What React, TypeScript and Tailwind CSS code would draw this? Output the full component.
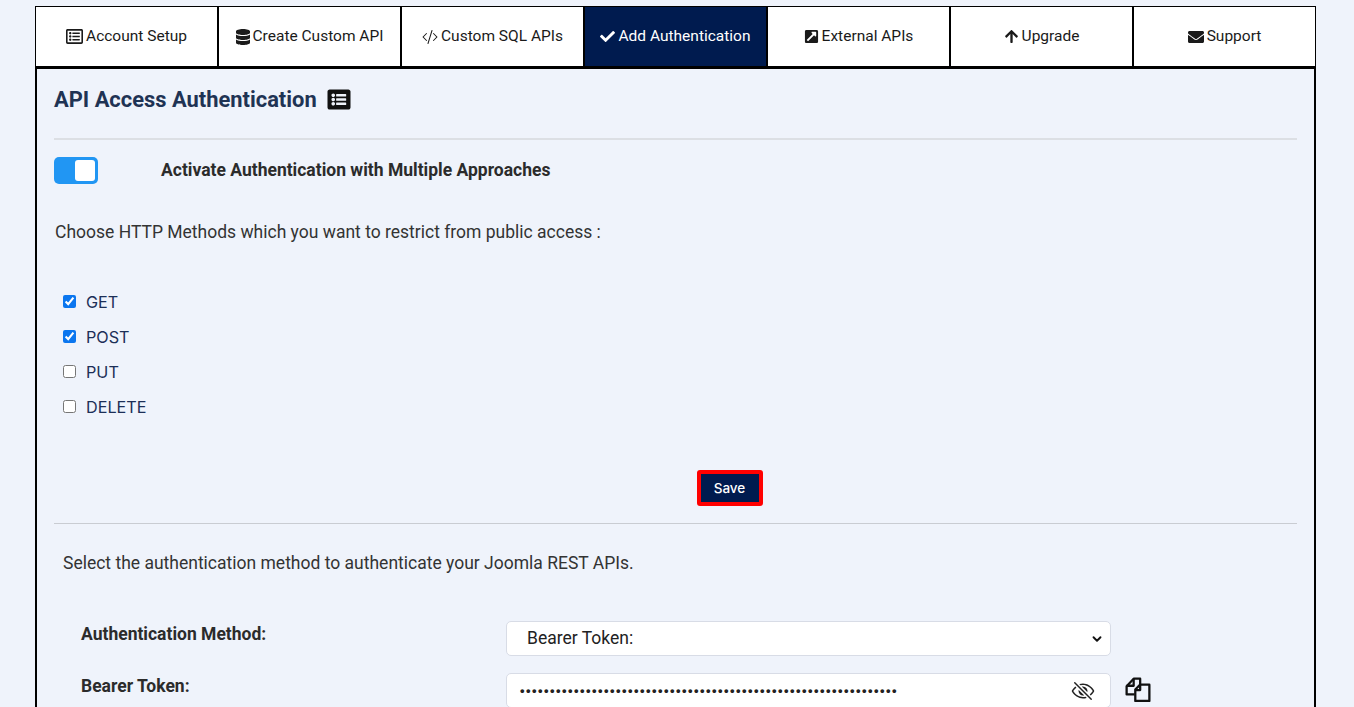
import type { ReactNode } from 'react';
import { FaArrowUp, FaCheck, FaDatabase, FaEnvelope, FaExternalLinkSquareAlt, FaListAlt, FaRegListAlt } from 'react-icons/fa';
import { BsCodeSlash } from 'react-icons/bs';
import { IoEyeOffOutline } from 'react-icons/io5';
import { ChevronDown } from 'lucide-react';

const tabs: { label: string; icon: ReactNode; active?: boolean }[] = [
  { label: 'Account Setup', icon: <FaRegListAlt className="w-[17px] h-[17px]" /> },
  { label: 'Create Custom API', icon: <FaDatabase className="w-[14px] h-[16px]" /> },
  { label: 'Custom SQL APIs', icon: <BsCodeSlash className="w-4 h-4" /> },
  { label: 'Add Authentication', icon: <FaCheck className="w-[15px] h-[15px]" />, active: true },
  { label: 'External APIs', icon: <FaExternalLinkSquareAlt className="w-[15px] h-[15px]" /> },
  { label: 'Upgrade', icon: <FaArrowUp className="w-[15px] h-[15px]" /> },
  { label: 'Support', icon: <FaEnvelope className="w-4 h-4" /> },
];

const methods = [
  { label: 'GET', checked: true },
  { label: 'POST', checked: true },
  { label: 'PUT', checked: false },
  { label: 'DELETE', checked: false },
];

function CopyIcon() {
  return (
    <svg viewBox="0 0 24 24" className="w-[26px] h-[26px]" fill="none" stroke="#111" strokeWidth="2.1" strokeLinejoin="round">
      <path d="M9 17H1.5v-7.5L8 2.5h6V8" />
      <path d="M8 2.5V9H1.5" />
      <path d="M9.5 12.5L14 8h8.5v15h-13z" />
      <path d="M14 8v5H9.5" />
    </svg>
  );
}

export default function App() {
  return (
    <div className="h-screen overflow-hidden bg-[#eff3fb] pt-[6px] pl-[35px] pr-[38px] font-['Roboto',sans-serif]">
      <div className="flex border-t border-l border-r border-black bg-white h-[63px] border-b-[3px]">
        {tabs.map((tab, i) => (
          <div
            key={tab.label}
            className={`flex-1 flex items-center justify-center gap-[3px] text-[15.5px] ${
              i < tabs.length - 1 ? 'border-r-2 border-black' : ''
            } ${tab.active ? 'bg-[#001b4f] text-white' : 'text-[#1a1a1a]'}`}
          >
            {tab.icon}
            <span>{tab.label}</span>
          </div>
        ))}
      </div>

      <div className="border-l-2 border-r-2 border-black pl-[17px] pr-[17px] h-[700px]">
        <div className="flex items-center gap-[9px] pt-[8px] h-[71px] pb-[16px] border-b-2 border-[#dcdfe4]">
          <h2 className="text-[21.9px] font-bold text-[#1f3354] leading-none">API Access Authentication</h2>
          <FaListAlt className="w-[26px] h-[23px] text-[#111]" />
        </div>

        <div className="flex items-center mt-[17px] h-[27px]">
          <div className="w-[44px] h-[27px] rounded-[5px] bg-[#2196f3] flex justify-end items-center pr-[3px]">
            <div className="w-[20px] h-[21px] rounded-[3px] bg-white"></div>
          </div>
          <div className="ml-[63px] text-[17.5px] font-bold text-[#2b2b2b]">Activate Authentication with Multiple Approaches</div>
        </div>

        <p className="mt-[35px] ml-px text-[17.5px] leading-[26px] text-[#333]">
          Choose HTTP Methods which you want to restrict from public access :
        </p>

        <div className="mt-[44px] ml-[9px] flex flex-col gap-[11px]">
          {methods.map((m) => (
            <label key={m.label} className="flex items-center gap-[10px] h-[24px] text-[16.2px] text-[#1c2f57] font-['Inter',sans-serif]">
              <input type="checkbox" defaultChecked={m.checked} className="w-[13px] h-[13px] accent-[#0b76ef]" />
              <span className="pt-[2px]">{m.label}</span>
            </label>
          ))}
        </div>

        <div className="mt-[52px] pl-[108px] flex justify-center">
          <button className="w-[66px] h-[36px] rounded-[3px] border-4 border-[#ff0000] bg-[#001b4f] pt-px text-white text-[13.5px] font-medium font-['Inter',sans-serif]">
            Save
          </button>
        </div>

        <div className="mt-[17px] border-t border-[#c9ccd2]"></div>

        <p className="mt-[26px] ml-[9px] text-[17.5px] leading-[26px] text-[#333]">
          Select the authentication method to authenticate your Joomla REST APIs.
        </p>

        <div className="mt-[45px] ml-[27px] flex items-start">
          <div className="w-[425px] pt-[0px] text-[17.5px] leading-[26px] font-bold text-[#2b2b2b]">Authentication Method:</div>
          <div className="w-[605px] h-[35px] bg-white rounded-[5px] border border-[#d8dce6] flex items-center justify-between pl-[20px] pr-[6px] text-[17.5px] text-[#222]">
            <span>Bearer Token:</span>
            <ChevronDown className="w-[14px] h-[14px] text-[#111]" strokeWidth={3.2} />
          </div>
        </div>

        <div className="mt-[17px] ml-[27px] flex items-start">
          <div className="w-[425px] text-[17.5px] leading-[26px] font-bold text-[#2b2b2b]">Bearer Token:</div>
          <div className="w-[605px] h-[35px] bg-white rounded-[5px] border border-[#d8dce6] flex items-center justify-between pl-[13px] pr-[15px]">
            <span className="text-[13px] font-bold text-[#222] tracking-[1.45px] font-['Liberation_Sans',sans-serif]">
              {'•'.repeat(63)}
            </span>
            <IoEyeOffOutline className="w-[24px] h-[24px] text-[#222]" />
          </div>
          <div className="ml-[14px] pt-[3px]">
            <CopyIcon />
          </div>
        </div>
      </div>
    </div>
  );
}
